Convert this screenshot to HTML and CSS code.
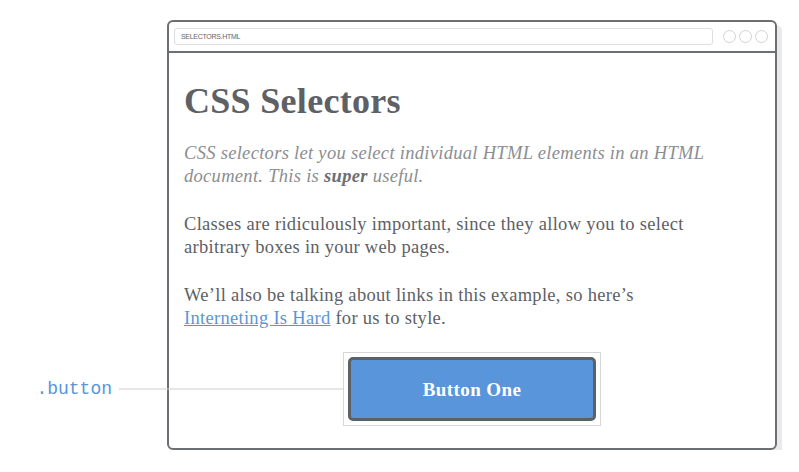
FILE: index.html
```html
<!DOCTYPE html>
<html lang="en">
<head>
    <meta charset="UTF-8">
    <meta name="viewport" content="width=device-width, initial-scale=1.0">
    <title>Selectors</title>
    <link rel="stylesheet" href="styles.css">
</head>
<body>
    <div class="stage">
        <div class="window">
            <div class="titlebar">
                <div class="address">SELECTORS.HTML</div>
                <div class="dots">
                    <span class="dot"></span>
                    <span class="dot"></span>
                    <span class="dot"></span>
                </div>
            </div>
            <div class="page">
                <h1>CSS Selectors</h1>
                <p class="synopsis">CSS selectors let you select individual HTML elements in an HTML document. This is <strong>super</strong> useful.</p>
                <p>Classes are ridiculously important, since they allow you to select arbitrary boxes in your web pages.</p>
                <p>We&rsquo;ll also be talking about links in this example, so here&rsquo;s <a href="#">Interneting Is Hard</a> for us to style.</p>
                <div class="button-row">
                    <div class="button-frame">
                        <div class="callout">
                            <span class="callout-label">.button</span>
                            <span class="callout-line"></span>
                        </div>
                        <a href="#" class="button">Button One</a>
                    </div>
                </div>
            </div>
        </div>
    </div>
</body>
</html>
```

FILE: styles.css
```css
body {
    margin: 0;
    background: #fff;
    font-family: "Liberation Serif", "Times New Roman", serif;
    color: #5d6165;
}
.stage {
    padding: 20px 0 0 167px;
}
.window {
    width: 610px;
    height: 430px;
    border: 2px solid #6b6e72;
    border-radius: 6px;
    box-shadow: 5px 5px 0 #e9e9e9;
    box-sizing: border-box;
    display: flex;
    flex-direction: column;
}
.titlebar {
    height: 31px;
    border-bottom: 2px solid #6b6e72;
    box-sizing: border-box;
    display: flex;
    align-items: center;
    padding: 0 7px 0 5px;
    gap: 10px;
}
.address {
    flex: 1;
    height: 17px;
    border: 1px solid #dcdee0;
    border-radius: 3px;
    box-sizing: border-box;
    font-family: "Liberation Sans", Arial, sans-serif;
    font-size: 7px;
    color: #666;
    display: flex;
    align-items: center;
    padding-left: 6px;
    letter-spacing: -0.3px;
}
.dots {
    display: flex;
    gap: 3px;
}
.dot {
    width: 13px;
    height: 13px;
    border: 1px solid #d0d2d4;
    border-radius: 50%;
    box-sizing: border-box;
}
.page {
    padding: 0 15px;
    font-size: 18.5px;
    line-height: 23px;
    letter-spacing: 0.3px;
}
h1 {
    font-size: 36px;
    line-height: 40px;
    letter-spacing: 0.3px;
    margin: 28px 0 21px;
}
p {
    max-width: 522px;
    margin: 0 0 25px;
}
.synopsis {
    font-style: italic;
    color: #8b8e91;
}
.synopsis strong {
    color: #6b6e72;
}
a {
    color: #5995da;
}
.button-row {
    display: flex;
    justify-content: center;
    margin-top: -3px;
}
.button-frame {
    position: relative;
    border: 1px solid #d6d6d6;
    padding: 4px;
}
.button {
    display: flex;
    align-items: center;
    justify-content: center;
    width: 248px;
    height: 64px;
    box-sizing: border-box;
    background: #5995da;
    border: 3px solid #5d6165;
    border-radius: 5px;
    color: #fff;
    font-weight: bold;
    font-size: 19px;
    letter-spacing: 0.4px;
    text-decoration: none;
}
.callout {
    position: absolute;
    right: 100%;
    top: 50%;
    display: flex;
    align-items: center;
    gap: 7px;
    transform: translateY(-50%);
}
.callout-label {
    font-family: "Liberation Mono", "Courier New", monospace;
    font-size: 18px;
    letter-spacing: 0;
    color: #5995da;
}
.callout-line {
    width: 225px;
    height: 1px;
    background: #cfcfcf;
}
```
